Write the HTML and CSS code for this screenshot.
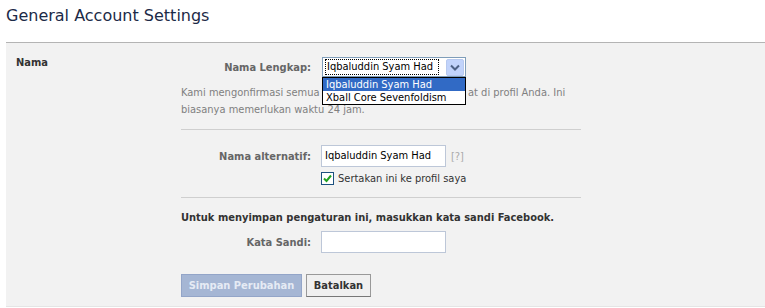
FILE: index.html
```html
<!DOCTYPE html>
<html lang="id">
<head>
    <meta charset="UTF-8">
    <title>General Account Settings</title>
    <link rel="stylesheet" href="styles.css">
</head>
<body>
    <h2 class="title">General Account Settings</h2>

    <div class="panel">
        <div class="section-label">Nama</div>

        <div class="section-body">
            <div class="row row-first">
                <label class="row-label">Nama Lengkap:</label>
                <div class="select-wrap">
                    <div class="select">
                        <span class="select-value">Iqbaluddin Syam Had</span>
                        <span class="select-btn">
                            <svg width="10" height="7" viewBox="0 0 10 7"><path d="M1 1.5 L5 5.5 L9 1.5" fill="none" stroke="#4d6185" stroke-width="2"/></svg>
                        </span>
                    </div>
                    <!-- dropdown terbuka -->
                    <ul class="select-list">
                        <li class="active">Iqbaluddin Syam Had</li>
                        <li>Xball Core Sevenfoldism</li>
                    </ul>
                </div>
            </div>

            <p class="desc">Kami mengonfirmasi semua p<span class="under-list"></span>at di profil Anda. Ini<br>biasanya memerlukan waktu 24 jam.</p>

            <div class="sep"></div>

            <div class="row row-alt">
                <label class="row-label">Nama alternatif:</label>
                <div class="field">
                    <span class="input">Iqbaluddin Syam Had</span>
                    <span class="help">[?]</span>
                </div>
            </div>
            <div class="check-row">
                <span class="checkbox">
                    <svg width="9" height="9" viewBox="0 0 9 9"><path d="M1 4.5 L3.5 7 L8 1.5" fill="none" stroke="#21a121" stroke-width="2"/></svg>
                </span>
                <span>Sertakan ini ke profil saya</span>
            </div>

            <div class="sep"></div>

            <div class="confirm">Untuk menyimpan pengaturan ini, masukkan kata sandi Facebook.</div>
            <div class="row row-pass">
                <label class="row-label">Kata Sandi:</label>
                <div class="field">
                    <span class="input"></span>
                </div>
            </div>

            <div class="buttons">
                <button class="btn btn-save">Simpan Perubahan</button>
                <button class="btn btn-cancel">Batalkan</button>
            </div>
        </div>
    </div>
</body>
</html>
```

FILE: styles.css
```css
html, body{
    margin: 0;
    background: #fff;
}
body{
    font-family: "DejaVu Sans Condensed", "DejaVu Sans", sans-serif;
    font-size: 11px;
    color: #333;
    width: 765px;
    overflow: hidden;
}
.title{
    margin: 0;
    padding: 6px 0 0 6px;
    height: 42px;
    box-sizing: border-box;
    font-family: "DejaVu Sans", sans-serif;
    font-size: 16px;
    font-weight: normal;
    color: #1c2a47;
    line-height: 20px;
}
.panel{
    margin-left: 6px;
    width: 759px;
    background: #f2f2f2;
    border-top: 1px solid #b4b4b4;
    border-bottom: 1px solid #e5e5e5;
    display: flex;
    padding-bottom: 9px;
}
.section-label{
    width: 165px;
    padding: 13px 0 0 10px;
    font-weight: bold;
    color: #333;
    line-height: 14px;
}
.section-body{
    width: 400px;
}
.row{
    display: grid;
    grid-template-columns: 130px 1fr;
    column-gap: 10px;
    align-items: center;
}
.row-label{
    text-align: right;
    font-weight: bold;
    color: #666;
}
.row-first{
    margin-top: 14px;
}
.select-wrap{
    position: relative;
    margin-left: 1px;
    width: 144px;
}
.select{
    height: 18px;
    border: 1px solid #7f9db9;
    background: #fff;
    display: flex;
    align-items: center;
    padding-left: 2px;
}
.select-value{
    flex: 1;
    border: 1px dotted #000;
    height: 14px;
    line-height: 14px;
    padding-left: 1px;
    color: #000;
    font-size: 11px;
    white-space: nowrap;
    overflow: hidden;
}
.select-btn{
    width: 16px;
    height: 15px;
    margin: 0 1px 0 7px;
    background: #c1d3fb;
    border: 1px solid #b7c9ef;
    border-radius: 2px;
    display: flex;
    align-items: center;
    justify-content: center;
}
.select-list{
    position: absolute;
    top: 20px;
    left: 0;
    width: 142px;
    margin: 0;
    padding: 0;
    list-style: none;
    background: #fff;
    border: 1px solid #000;
    color: #000;
    font-size: 11px;
}
.select-list li{
    height: 13px;
    line-height: 13px;
    padding-left: 3px;
    white-space: nowrap;
}
.select-list li.active{
    background: #316ac5;
    color: #fff;
}
.desc{
    margin: 7px 0 0;
    line-height: 17px;
    color: #808080;
    white-space: nowrap;
}
.under-list{
    display: inline-block;
    width: 139px;
}
.sep{
    height: 1px;
    background: #cfcfcf;
}
.desc + .sep{
    margin-top: 11px;
}
.row-alt{
    margin-top: 15px;
}
.field{
    display: flex;
    align-items: center;
}
.input{
    box-sizing: border-box;
    width: 125px;
    height: 22px;
    border: 1px solid #bdc7d8;
    background: #fff;
    color: #000;
    font-size: 11px;
    line-height: 20px;
    padding-left: 3px;
}
.help{
    margin-left: 5px;
    color: #aaa;
}
.check-row{
    margin-top: 5px;
    padding-left: 140px;
    display: flex;
    align-items: center;
    gap: 4px;
    color: #333;
    height: 13px;
}
.checkbox{
    box-sizing: border-box;
    width: 13px;
    height: 13px;
    border: 1px solid #1c5180;
    background: #fff;
    display: flex;
    align-items: center;
    justify-content: center;
}
.check-row + .sep{
    margin-top: 12px;
}
.confirm{
    margin-top: 13px;
    font-weight: bold;
    color: #333;
    line-height: 14px;
}
.row-pass{
    margin-top: 6px;
}
.buttons{
    margin-top: 21px;
    display: flex;
    gap: 4px;
}
.btn{
    font-family: inherit;
    font-size: 11px;
    font-weight: bold;
    height: 23px;
    padding: 0 6px;
    margin: 0;
}
.btn-save{
    width: 121px;
    background: #a5b6d4;
    border: 1px solid #93a5c8;
    color: #e6ebf4;
}
.btn-cancel{
    width: 65px;
    background: #f0f0f0;
    border: 1px solid #999;
    border-bottom-color: #777;
    color: #333;
}
```
